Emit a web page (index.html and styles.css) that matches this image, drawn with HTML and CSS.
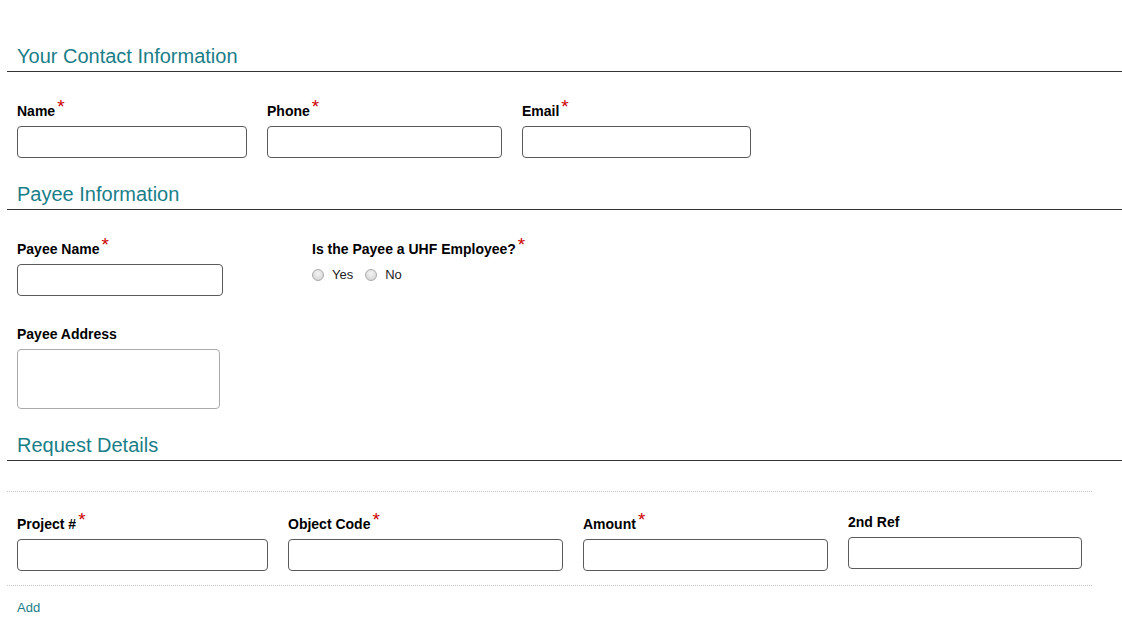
FILE: index.html
```html
<!DOCTYPE html>
<html lang="en">
<head>
    <meta charset="UTF-8">
    <meta name="viewport" content="width=device-width, initial-scale=1.0">
    <title>Check Request</title>
    <link rel="stylesheet" href="styles.css">
</head>
<body>
    <form class="request-form">
        <!-- Contact -->
        <section class="form-section">
            <h2 class="section-title">Your Contact Information</h2>
            <div class="field-row contact-row">
                <div class="field">
                    <label class="field-label">Name<span class="req">*</span></label>
                    <input type="text" class="text-input">
                </div>
                <div class="field">
                    <label class="field-label">Phone<span class="req">*</span></label>
                    <input type="text" class="text-input">
                </div>
                <div class="field">
                    <label class="field-label">Email<span class="req">*</span></label>
                    <input type="text" class="text-input">
                </div>
            </div>
        </section>

        <!-- Payee -->
        <section class="form-section">
            <h2 class="section-title">Payee Information</h2>
            <div class="field-row payee-row">
                <div class="field">
                    <label class="field-label">Payee Name<span class="req">*</span></label>
                    <input type="text" class="text-input">
                </div>
                <div class="field">
                    <label class="field-label">Is the Payee a UHF Employee?<span class="req">*</span></label>
                    <div class="radio-group">
                        <label class="radio-option"><input type="radio" name="employee" class="radio"> Yes</label>
                        <label class="radio-option"><input type="radio" name="employee" class="radio"> No</label>
                    </div>
                </div>
            </div>
            <div class="field-row address-row">
                <div class="field">
                    <label class="field-label">Payee Address</label>
                    <textarea class="text-area"></textarea>
                </div>
            </div>
        </section>

        <!-- Line items -->
        <section class="form-section">
            <h2 class="section-title">Request Details</h2>
            <div class="line-items">
                <div class="field-row line-row">
                    <div class="field">
                        <label class="field-label">Project #<span class="req">*</span></label>
                        <input type="text" class="text-input">
                    </div>
                    <div class="field">
                        <label class="field-label">Object Code<span class="req">*</span></label>
                        <input type="text" class="text-input">
                    </div>
                    <div class="field">
                        <label class="field-label">Amount<span class="req">*</span></label>
                        <input type="text" class="text-input">
                    </div>
                    <div class="field">
                        <label class="field-label">2nd Ref</label>
                        <input type="text" class="text-input">
                    </div>
                </div>
            </div>
            <a href="#" class="add-link">Add</a>
        </section>
    </form>
</body>
</html>
```

FILE: styles.css
```css
* {
    margin: 0;
    padding: 0;
    box-sizing: border-box;
}

body {
    font-family: 'Liberation Sans', Arial, sans-serif;
    color: #000;
    background: #fff;
}

.request-form {
    padding: 44px 0 0 7px;
}

/* Section headings */
.section-title {
    font-size: 20px;
    font-weight: normal;
    line-height: 24px;
    color: #1a7e88;
    padding: 0 10px 3px;
    border-bottom: 1px solid #333;
}

.form-section + .form-section {
    margin-top: 24px;
}

/* Fields */
.field-row {
    display: flex;
    align-items: flex-start;
    gap: 20px;
    padding: 0 10px;
    margin-top: 28px;
}

.field {
    display: flex;
    flex-direction: column;
}

.field-label {
    display: block;
    font-size: 14px;
    font-weight: bold;
    line-height: 18px;
    margin-bottom: 6px;
}

.req {
    color: #c00;
    font-size: 19px;
    font-weight: normal;
    line-height: 14px;
    vertical-align: 3px;
    margin-left: 2px;
}

.text-input {
    height: 32px;
    border: 1px solid #5a5a5a;
    border-radius: 4px;
    font: inherit;
    padding: 0 8px;
}

.text-area {
    width: 203px;
    height: 60px;
    border: 1px solid #aaa;
    border-radius: 4px;
    resize: none;
    font: inherit;
}

.contact-row .field:nth-child(1) .text-input { width: 230px; }
.contact-row .field:nth-child(2) .text-input { width: 235px; }
.contact-row .field:nth-child(3) .text-input { width: 229px; }

.payee-row {
    gap: 89px;
}

.payee-row .field:first-child .text-input { width: 206px; }

.address-row {
    margin-top: 29px;
}

/* Radio buttons */
.radio-group {
    display: flex;
    gap: 12px;
    line-height: 20px;
    margin-top: 1px;
}

.radio-option {
    display: flex;
    align-items: center;
    gap: 8px;
    font-size: 13px;
    color: #222;
}

.radio {
    appearance: none;
    width: 12px;
    height: 12px;
    border: 1px solid #aaa;
    border-radius: 50%;
    background: radial-gradient(circle at 50% 35%, #f4f4f4, #cfcfcf);
    margin: 0;
}

/* Request line items */
.line-items {
    margin: 30px 30px 0 0;
    border-top: 1px dotted #c8c8c8;
    border-bottom: 1px dotted #c8c8c8;
    padding-bottom: 14px;
}

.line-row {
    margin-top: 21px;
}

.line-row .field:nth-child(1) .text-input { width: 251px; }
.line-row .field:nth-child(2) .text-input { width: 275px; }
.line-row .field:nth-child(3) .text-input { width: 245px; }
.line-row .field:nth-child(4) .text-input { width: 234px; }

.add-link {
    display: inline-block;
    margin: 14px 0 0 10px;
    font-size: 13px;
    color: #1a7e88;
    text-decoration: none;
}
```
